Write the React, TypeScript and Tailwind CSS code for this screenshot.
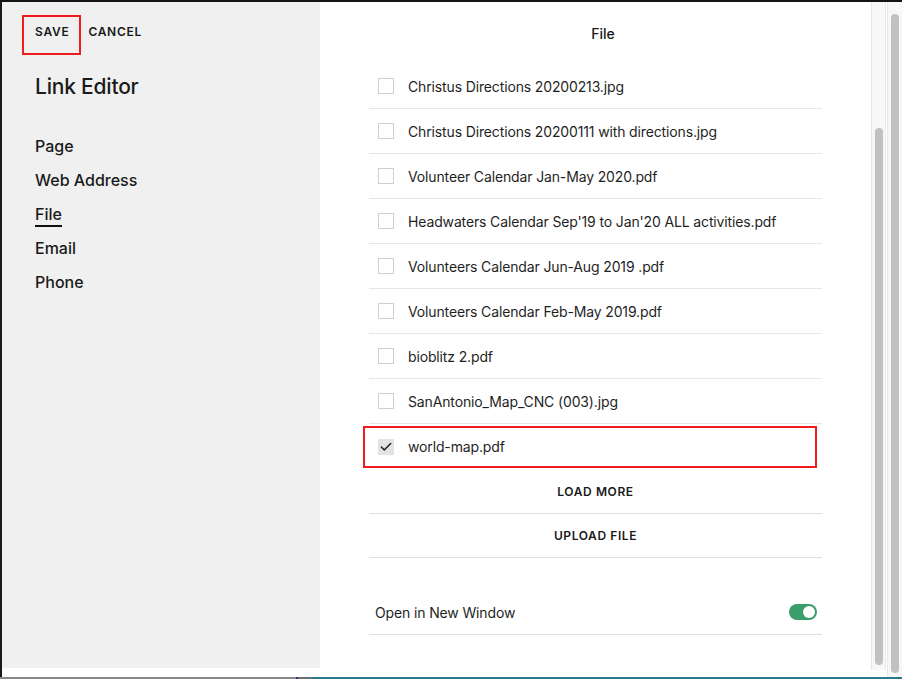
import React from 'react';
import { Check } from 'lucide-react';

const files = [
  { name: 'Christus Directions 20200213.jpg', checked: false },
  { name: 'Christus Directions 20200111 with directions.jpg', checked: false },
  { name: 'Volunteer Calendar Jan-May 2020.pdf', checked: false },
  { name: "Headwaters Calendar Sep'19 to Jan'20 ALL activities.pdf", checked: false },
  { name: 'Volunteers Calendar Jun-Aug 2019 .pdf', checked: false },
  { name: 'Volunteers Calendar Feb-May 2019.pdf', checked: false },
  { name: 'bioblitz 2.pdf', checked: false },
  { name: 'SanAntonio_Map_CNC (003).jpg', checked: false },
  { name: 'world-map.pdf', checked: true },
];

const navItems = ['Page', 'Web Address', 'File', 'Email', 'Phone'];

const App: React.FC = () => {
  return (
    <div
      className="w-[902px] h-[679px] bg-[#8a8a8a] flex flex-col overflow-hidden text-[#1a1a1a]"
      style={{ fontFamily: 'Inter, "Noto Sans", sans-serif' }}
    >
      <div className="h-[2px] bg-[#141414] shrink-0" />
      <div className="flex flex-1 min-h-0">
        <div className="w-[2px] bg-[#1a1a1a] shrink-0" />
        {/* Modal */}
        <div className="flex-1 h-[675px] bg-white flex">
          {/* Sidebar */}
          <div className="w-[318px] h-[666px] bg-[#f0f0f0] shrink-0 flex flex-col pl-[33px]">
            <div className="flex items-start h-[52px] pt-[22px]">
              <button className="relative text-[12px] leading-[15px] font-semibold tracking-[0.06em] text-[#1a1a1a]">
                SAVE
                <span className="absolute left-[-13px] top-[-9px] w-[59px] h-[40px] border-2 border-[#ee1c1c]" />
              </button>
              <button className="ml-[19px] text-[12px] leading-[15px] font-semibold tracking-[0.06em] text-[#1a1a1a]">CANCEL</button>
            </div>
            <h1 className="mt-[19px] text-[21px] font-medium tracking-[-0.01em] leading-[28px]">Link Editor</h1>
            <nav className="mt-[33px] flex flex-col gap-[10px]">
              {navItems.map((item) => (
                <div key={item} className="h-[24px] flex flex-col">
                  <span className="text-[16px] font-medium leading-[24px] w-fit">
                    {item}
                    {item === 'File' && <span className="block h-[2px] bg-[#111] mt-[-1px]" />}
                  </span>
                </div>
              ))}
            </nav>
          </div>

          {/* Content */}
          <div className="flex-1 flex flex-col">
            <div className="h-[62px] flex items-center justify-center pl-[15px] text-[14px] font-medium">File</div>
            <div className="w-[453px] ml-[49px] flex flex-col">
              {files.map((f) => (
                <div
                  key={f.name}
                  className={`relative h-[45px] flex items-center pl-[9px] ${f.checked ? '' : 'border-b border-[#e6e6e6]'}`}
                >
                  {f.checked && (
                    <span className="absolute left-[-6px] top-[2px] w-[454px] h-[42px] border-2 border-[#ee1c1c]" />
                  )}
                  {f.checked ? (
                    <span className="w-[16px] h-[16px] bg-[#e3e3e3] flex items-center justify-center">
                      <Check className="w-[14px] h-[14px] text-[#1a1a1a]" strokeWidth={2.5} />
                    </span>
                  ) : (
                    <span className="w-[16px] h-[16px] border border-[#cfcfcf] bg-white" />
                  )}
                  <span className="ml-[14px] text-[14px] tracking-[-0.01em] text-[#1f1f1f]">{f.name}</span>
                </div>
              ))}
              <div className="h-[44px] mt-[1px] flex items-center justify-center border-b border-[#e0e0e0] text-[12px] font-semibold tracking-[0.05em]">
                LOAD MORE
              </div>
              <div className="h-[44px] flex items-center justify-center border-b border-[#e0e0e0] text-[12px] font-semibold tracking-[0.05em]">
                UPLOAD FILE
              </div>
              <div className="mt-[32px] h-[45px] flex items-center justify-between pl-[6px] pr-[5px] border-b border-[#e0e0e0]">
                <span className="text-[14px] tracking-[-0.01em] text-[#1f1f1f]">Open in New Window</span>
                <span className="w-[28px] h-[16px] rounded-full bg-[#3a9e6a] flex items-center justify-end pr-[2px]">
                  <span className="w-[12px] h-[12px] rounded-full bg-white" />
                </span>
              </div>
            </div>
          </div>

          {/* Inner scrollbar */}
          <div className="w-[15px] h-[668px] bg-[#f7f7f7] border-x border-[#e8e8e8] shrink-0 flex flex-col pt-[126px] items-center">
            <div className="w-[8px] h-[537px] bg-[#c1c1c1] rounded-full" />
          </div>
          <div className="w-[1px] shrink-0" />
          {/* Outer scrollbar */}
          <div className="w-[15px] bg-[#f7f7f7] border-l border-[#e8e8e8] shrink-0 flex flex-col pt-[12px] items-center">
            <div className="w-[8px] h-[659px] bg-[#c1c1c1] rounded-full" />
          </div>
        </div>
      </div>
      <div className="h-[2px] flex shrink-0">
        <div className="w-[296px] bg-[#8a8a8a]" />
        <div className="w-[2px] bg-[#1d3f8a]" />
        <div className="w-[13px] bg-[#6f6f6f]" />
        <div className="flex-1 bg-[#2b7a8a]" />
      </div>
    </div>
  );
};

export default App;
